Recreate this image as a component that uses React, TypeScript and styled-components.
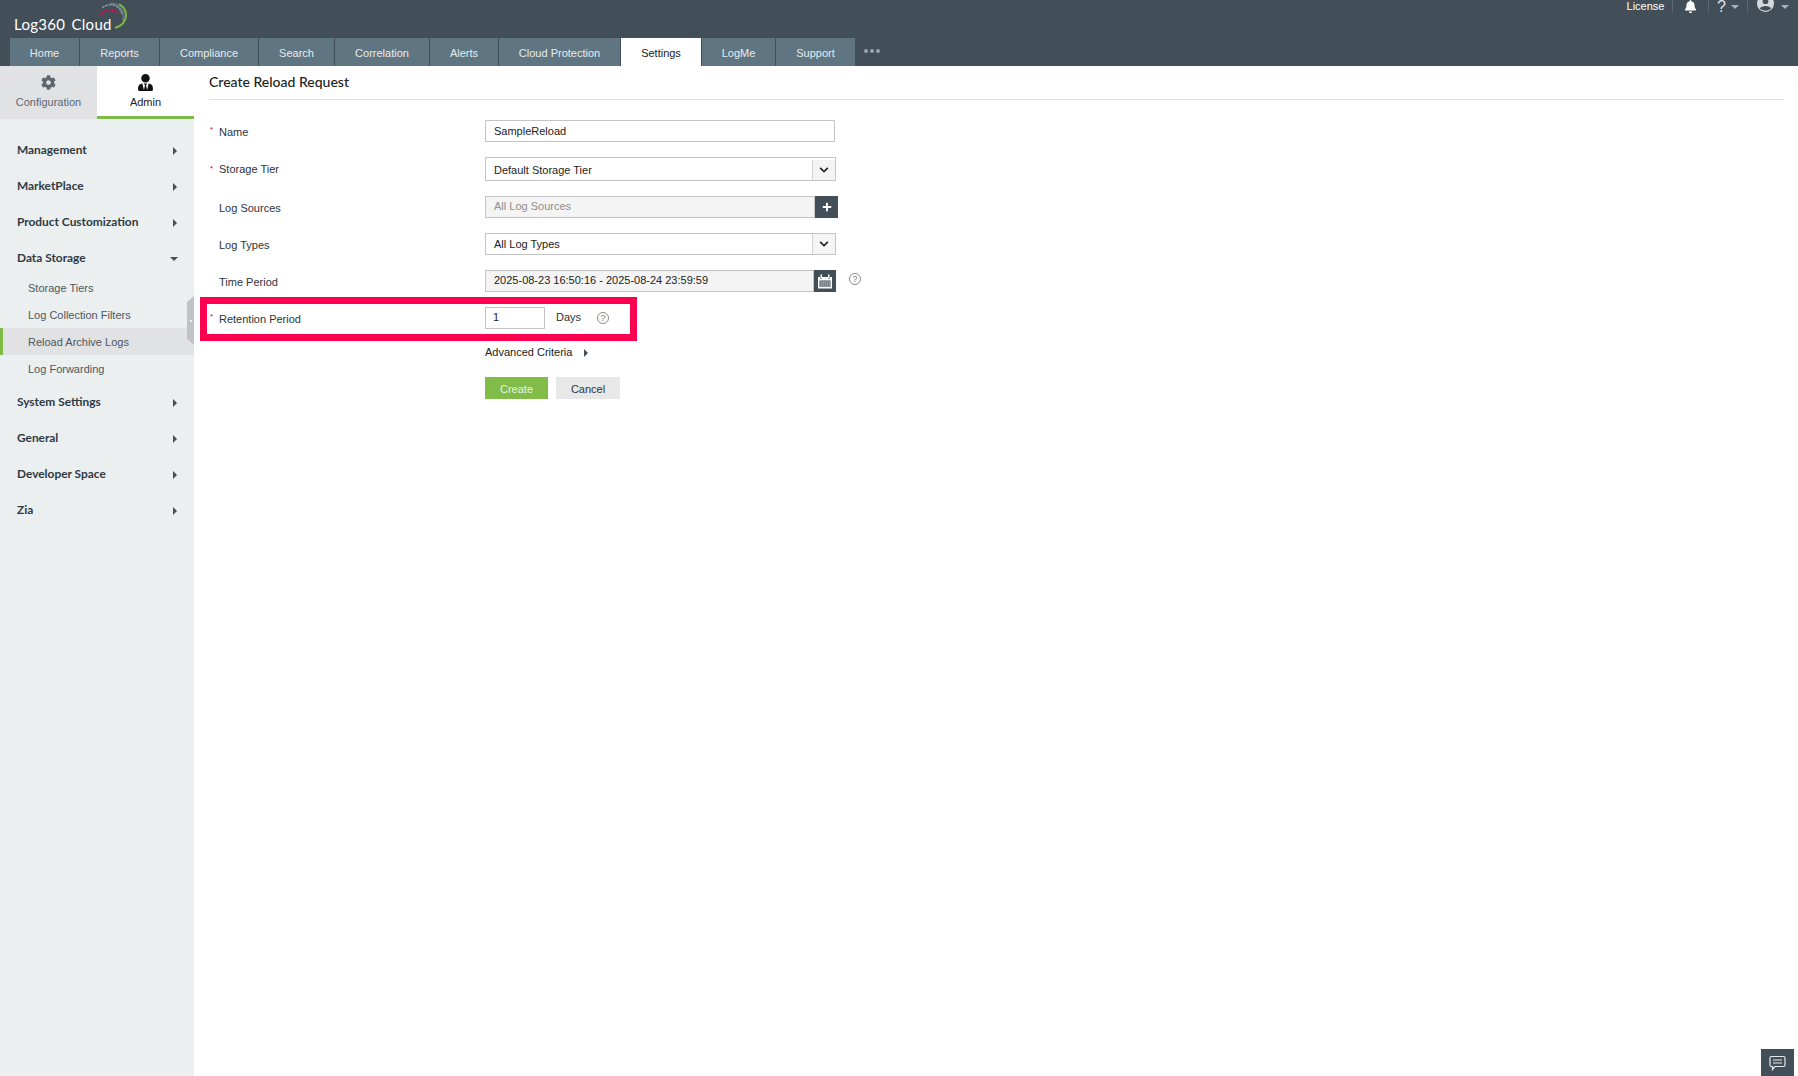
import React from 'react';
import styled, { createGlobalStyle } from 'styled-components';
import { FaCog, FaUserTie, FaBell, FaPlus, FaChevronDown } from 'react-icons/fa';

const Global = createGlobalStyle`
  html, body { margin: 0; padding: 0; background: #fff; height: 100%; overflow: hidden; }
  body { font-family: "Liberation Sans", Arial, sans-serif; color: #222; }
  #root { height: 100%; }
`;

const Page = styled.div`display: flex; flex-direction: column; height: 1076px; width: 1798px; position: relative; overflow: hidden;`;
const Header = styled.header`background: #434f58; height: 66px; flex: none; display: flex; flex-direction: column;`;
const TopRow = styled.div`height: 38px; display: flex; justify-content: space-between; align-items: flex-start; flex: none;`;
const Logo = styled.div`display: flex; align-items: flex-start; padding-left: 14px; position: relative; width: 130px; height: 38px;`;
const LogoText = styled.span`font-family: Lato, sans-serif; font-size: 15px; color: #fff; letter-spacing: 0.3px; word-spacing: 2px; line-height: 18px; margin-top: 15px; white-space: nowrap;`;
const LogoMark = styled.svg`position: absolute; left: 98px; top: 2px;`;
const TopRight = styled.div`display: flex; align-items: flex-start; height: 14px; color: #fff; font-size: 11px;`;
const TopItem = styled.div<{ $w: number }>`width: ${p => p.$w}px; height: 13px; display: flex; align-items: center; justify-content: center; gap: 3px; border-right: 1px solid #5c6871; box-sizing: border-box; line-height: 13px; &:last-child { border-right: none; }`;
const Caret = styled.i`width: 0; height: 0; border-left: 4px solid transparent; border-right: 4px solid transparent; border-top: 4px solid #aab2b8; display: block; margin-left: 2px;`;
const Question = styled.span`font-size: 16px; color: #dfe3e6; line-height: 13px;`;

const TabBar = styled.nav`display: flex; height: 28px; padding-left: 10px; align-items: stretch;`;
const Tab = styled.a<{ $w: number; $active?: boolean }>`
  width: ${p => p.$w}px; margin-right: 1px; background: ${p => (p.$active ? '#fff' : '#607582')};
  color: ${p => (p.$active ? '#222' : '#e8ecee')}; font-size: 11px; display: flex; align-items: center; justify-content: center; padding-top: 1px; box-sizing: border-box;
`;
const Dots = styled.div`display: flex; gap: 2px; align-items: center; margin: -2px 0 0 8px;`;
const Dot = styled.i`width: 4px; height: 4px; border-radius: 50%; background: #9aa4ab; display: block;`;

const Body = styled.div`flex: 1; display: flex; min-height: 0;`;
const Sidebar = styled.aside`width: 194px; flex: none; background: #ebeff0; position: relative;`;
const SideTabs = styled.div`display: flex; height: 53px; margin-bottom: 13px;`;
const SideTab = styled.div<{ $active?: boolean }>`
  width: 97px; box-sizing: border-box; display: flex; flex-direction: column; align-items: center; padding-top: 8px;
  background: ${p => (p.$active ? '#fff' : '#e0e2e4')}; color: ${p => (p.$active ? '#222' : '#5c6770')}; font-size: 11px;
  border-bottom: 3px solid ${p => (p.$active ? '#7fba47' : '#e0e2e4')};
`;
const SideIcon = styled.span`height: 17px; margin-bottom: 5px; display: flex; align-items: center;`;
const Head = styled.div`height: 36px; box-sizing: border-box; padding: 0 17px 2px; display: flex; align-items: center; justify-content: space-between; font-family: Lato, sans-serif; font-weight: 700; font-size: 11.9px; color: #2f3a42;`;
const Arrow = styled.i<{ $down?: boolean }>`
  width: 0; height: 0; display: block; margin-top: 4px;
  ${p => p.$down
    ? 'border-left: 4px solid transparent; border-right: 4px solid transparent; border-top: 4px solid #444f57; margin-right: -1px;'
    : 'border-top: 4px solid transparent; border-bottom: 4px solid transparent; border-left: 4px solid #444f57;'}
`;
const SubList = styled.div`margin: -2px 0 2px;`;
const Sub = styled.div<{ $active?: boolean }>`
  height: 27px; box-sizing: border-box; display: flex; align-items: center; padding-left: ${p => (p.$active ? '25px' : '28px')}; font-size: 11px; color: #4c5760;
  ${p => p.$active && 'background: #e0e2e4; border-left: 3px solid #7fba47;'}
`;
const Collapser = styled.div`
  position: absolute; right: 0; top: 230px; width: 7px; height: 49px; background: #bfc3c4;
  clip-path: polygon(100% 0, 100% 100%, 0 88%, 0 12%); display: flex; align-items: center; justify-content: center;
  &::after { content: ''; width: 2px; height: 2px; border-radius: 50%; background: #fff; }
`;

const Main = styled.main`flex: 1; padding: 0 14px 0 15px; position: relative;`;
const Title = styled.h1`margin: 0 0 20px; height: 33px; box-sizing: content-box; line-height: 32px; border-bottom: 1px solid #e2e2e2; font-family: Lato, sans-serif; font-weight: 500; font-size: 14px; color: #222;`;
const Form = styled.form`display: flex; flex-direction: column; gap: 15px;`;
const Row = styled.div`display: flex; align-items: center;`;
const Label = styled.label<{ $req?: boolean; $up?: boolean }>`
  width: 276px; flex: none; box-sizing: border-box; padding-left: 10px; font-size: 11px; color: #2c343a; position: relative; padding-top: ${p => (p.$up ? 0 : 2)}px;
  ${p => p.$req && `&::before { content: '*'; color: #e8004c; position: absolute; left: 1px; top: 1px; font-size: 8px; }`}
`;
const Text = styled.div<{ $w: number; $h?: number; $muted?: boolean; $disabled?: boolean; $down?: boolean; $lift?: boolean; $pad?: number }>`
  width: ${p => p.$w}px; height: ${p => p.$h ?? 22}px; box-sizing: border-box; border: 1px solid #c4c4c4;
  background: ${p => (p.$disabled ? '#f4f4f4' : '#fff')}; color: ${p => (p.$muted ? '#8f8f8f' : '#222')};
  font-size: 11px; display: flex; align-items: center; padding: ${p => (p.$down ? 2 : 0)}px 0 ${p => (p.$lift ? 2 : 0)}px ${p => p.$pad ?? 8}px; flex: none;
`;
const ChevCell = styled.span`margin-left: auto; width: 22px; align-self: stretch; border-left: 1px solid #d4d4d4; background: #f4f4f4; display: flex; align-items: center; justify-content: center; color: #222;`;
const IconBtn = styled.button<{ $w: number }>`width: ${p => p.$w}px; height: 22px; border: none; padding: 0; background: #434f58; color: #fff; display: flex; align-items: center; justify-content: center; flex: none;`;
const Help = styled.span<{ $ml: number; $mt: number }>`width: 10px; height: 10px; border: 1px solid #8c8c8c; border-radius: 50%; font-size: 9px; line-height: 10px; text-align: center; color: #777; margin: ${p => p.$mt}px 0 0 ${p => p.$ml}px; flex: none;`;
const Unit = styled.span`font-size: 11px; margin: -2px 0 0 11px; color: #2c343a;`;
const Advanced = styled.div`margin: 0 0 0 276px; font-size: 11px; color: #222; display: flex; align-items: center; gap: 12px; height: 16px; ${Arrow} { margin-top: 2px; }`;
const Actions = styled.div`display: flex; gap: 8px; margin: 2px 0 0 276px;`;
const Btn = styled.button<{ $primary?: boolean }>`
  width: ${p => (p.$primary ? 63 : 64)}px; height: 22px; border: none; padding: 1px 0 0; font: 11px "Liberation Sans", sans-serif;
  background: ${p => (p.$primary ? '#82bc48' : '#e8e8e8')}; color: ${p => (p.$primary ? '#e9f5dc' : '#333')};
`;
const Highlight = styled.div`position: absolute; left: 6px; top: 231px; width: 437px; height: 44px; box-sizing: border-box; border: 7px solid #ff0050; pointer-events: none;`;
const Chat = styled.div`position: absolute; right: 4px; bottom: 0; width: 33px; height: 27px; background: #434f58; display: flex; align-items: center; justify-content: center;`;

const tabs: [string, number, boolean?][] = [
  ['Home', 69], ['Reports', 79], ['Compliance', 98], ['Search', 75], ['Correlation', 94], ['Alerts', 68],
  ['Cloud Protection', 121], ['Settings', 80, true], ['LogMe', 73], ['Support', 79],
];

const CalendarIcon = () => (
  <svg width="16" height="15" viewBox="0 0 16 15" fill="#fff">
    <path d="M1 3h2v1.500h2V3h6v1.500h2V3h2v11.500H1z" />
    <rect x="3.500" y="0.500" width="1.500" height="3.500" />
    <rect x="11" y="0.500" width="1.500" height="3.500" />
    <rect x="2.500" y="6.500" width="11" height="6.500" fill="#434f58" />
    {[3.5, 5.5, 7.5, 9.5, 11.5].map(x => [7.5, 9.5, 11.5].map(y => <rect key={`${x}-${y}`} x={x} y={y} width="1.200" height="1.200" />))}
  </svg>
);

export default function App() {
  return (
    <Page>
      <Global />
      <Header>
        <TopRow>
          <Logo>
            <LogoText>Log360 Cloud</LogoText>
            <LogoMark width="32" height="28" viewBox="0 0 32 28" fill="none">
              <path d="M2.500 13.500C6 7 15 6 20 11" stroke="#e8004c" strokeWidth="1.300" strokeDasharray="2 .6" />
              <path d="M4 6C10 1 21 1 24 12" stroke="#8a969e" strokeWidth="1.500" strokeDasharray="3 .7" />
              <path d="M12 1.500C20 1 27 7 25 19" stroke="#6f7d86" strokeWidth="1.500" />
              <path d="M21 2C30 7 32 21 17 26" stroke="#7fba47" strokeWidth="2" />
            </LogoMark>
          </Logo>
          <TopRight>
            <TopItem $w={54}>License</TopItem>
            <TopItem $w={36}><FaBell size={13} style={{ marginTop: -1 }} /></TopItem>
            <TopItem $w={39}><Question>?</Question><Caret /></TopItem>
            <TopItem $w={50}>
              <svg width="17" height="17" viewBox="0 0 15 15" style={{ marginTop: -7, marginRight: 2, flex: 'none' }}>
                <circle cx="7.500" cy="7.500" r="7.500" fill="#d5d9dc" />
                <circle cx="7.500" cy="5.500" r="2.500" fill="#434f58" />
                <path d="M2.500 12c1-3 9-3 10 0-2 2.500-8 2.500-10 0z" fill="#434f58" />
              </svg>
              <Caret />
            </TopItem>
          </TopRight>
        </TopRow>
        <TabBar>
          {tabs.map(([t, w, a]) => <Tab key={t} $w={w} $active={a}>{t}</Tab>)}
          <Dots><Dot /><Dot /><Dot /></Dots>
        </TabBar>
      </Header>
      <Body>
        <Sidebar>
          <SideTabs>
            <SideTab><SideIcon><FaCog size={15} color="#5c6770" /></SideIcon>Configuration</SideTab>
            <SideTab $active><SideIcon><FaUserTie size={17} color="#111" /></SideIcon>Admin</SideTab>
          </SideTabs>
          <Head>Management<Arrow /></Head>
          <Head>MarketPlace<Arrow /></Head>
          <Head>Product Customization<Arrow /></Head>
          <Head>Data Storage<Arrow $down /></Head>
          <SubList>
            <Sub>Storage Tiers</Sub>
            <Sub>Log Collection Filters</Sub>
            <Sub $active>Reload Archive Logs</Sub>
            <Sub>Log Forwarding</Sub>
          </SubList>
          <Head>System Settings<Arrow /></Head>
          <Head>General<Arrow /></Head>
          <Head>Developer Space<Arrow /></Head>
          <Head>Zia<Arrow /></Head>
          <Collapser />
        </Sidebar>
        <Main>
          <Title>Create Reload Request</Title>
          <Form>
            <Row><Label $req>Name</Label><Text $w={350}>SampleReload</Text></Row>
            <Row><Label $req $up>Storage Tier</Label><Text $w={351} $h={24} $down>Default Storage Tier<ChevCell><FaChevronDown size={10} /></ChevCell></Text></Row>
            <Row><Label>Log Sources</Label><Text $w={330} $muted $disabled $lift>All Log Sources</Text><IconBtn $w={23}><FaPlus size={10} /></IconBtn></Row>
            <Row><Label>Log Types</Label><Text $w={351}>All Log Types<ChevCell><FaChevronDown size={10} /></ChevCell></Text></Row>
            <Row><Label>Time Period</Label><Text $w={329} $disabled $lift>2025-08-23 16:50:16 - 2025-08-24 23:59:59</Text><IconBtn $w={22}><CalendarIcon /></IconBtn><Help $ml={13} $mt={-4}>?</Help></Row>
            <Row><Label $req>Retention Period</Label><Text $w={60} $lift $pad={7}>1</Text><Unit>Days</Unit><Help $ml={16} $mt={0}>?</Help></Row>
            <Advanced>Advanced Criteria<Arrow /></Advanced>
            <Actions><Btn $primary type="button">Create</Btn><Btn type="button">Cancel</Btn></Actions>
          </Form>
          <Highlight />
        </Main>
      </Body>
      <Chat>
        <svg width="17" height="16" viewBox="0 0 17 16" fill="none" stroke="#e6eaec" strokeWidth="1.200">
          <path d="M2.500 1.500h12a1.500 1.500 0 0 1 1.500 1.500v7a1.500 1.500 0 0 1-1.500 1.500H6l-2.500 3v-3h-1A1.500 1.500 0 0 1 1 10V3a1.500 1.500 0 0 1 1.500-1.500z" />
          <path d="M4 5h9M4 8h9" />
        </svg>
      </Chat>
    </Page>
  );
}
